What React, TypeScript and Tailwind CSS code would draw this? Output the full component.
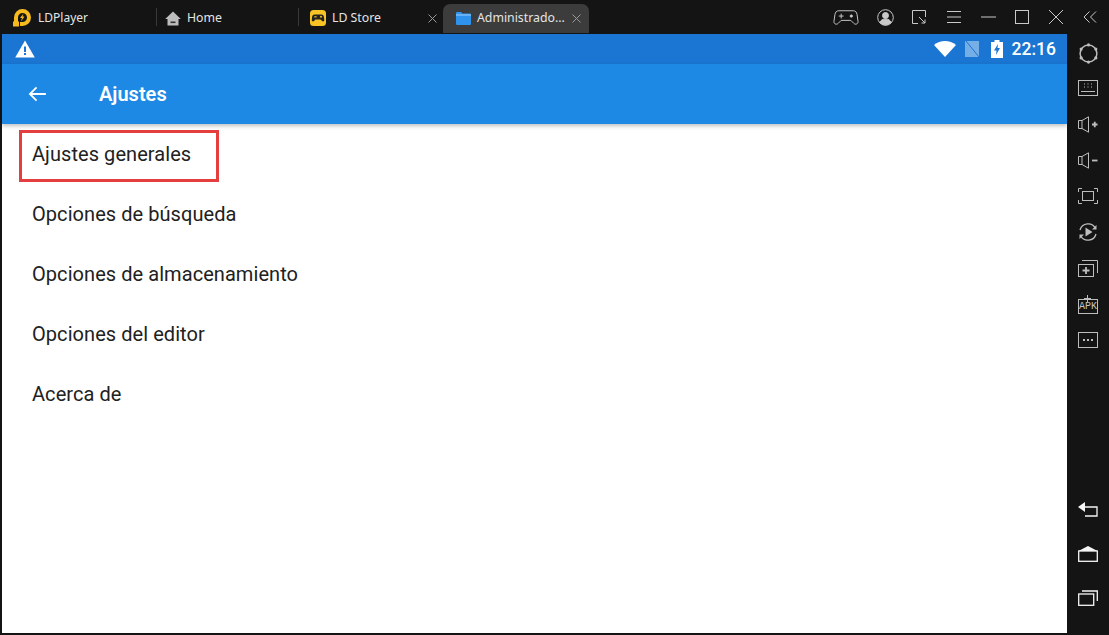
import React from 'react';

const s = '#c9c9c9';

const Logo = () => (
  <svg width="19" height="19" viewBox="0 0 19 19">
    <path d="M4 15V9.500a6.500 6.500 0 1 1 6.500 6.500H8" fill="none" stroke="#f7bb1e" strokeWidth="4" />
    <rect x="1" y="13.500" width="6" height="5" fill="#f7bb1e" />
    <path d="M11.500 5.500l-3.500 4.500h2l-1 3.500 3.500-5h-2z" fill="#f7bb1e" />
  </svg>
);

const HomeIcon = () => (
  <svg width="16" height="15" viewBox="0 0 16 15">
    <path d="M8 0.500 15.800 8H13.500V14.500H2.500V8H0.200z" fill="#bdbdbd" />
    <rect x="5.500" y="10.500" width="5" height="1.600" fill="#333" />
  </svg>
);

const StoreIcon = () => (
  <svg width="16" height="16" viewBox="0 0 16 16">
    <rect width="16" height="16" rx="3.500" fill="#f7c325" />
    <path d="M4.500 4.500h7c1.500 0 2.300 1.200 2.500 3l.3 2.500c.1 1.400-1.300 1.900-2.200 1L10.500 9.500h-5L4 11c-.9.900-2.300.400-2.200-1L2 7.500c.2-1.800 1-3 2.500-3z" fill="#222" />
    <rect x="4.200" y="6.300" width="2.400" height="1.100" fill="#f7c325" />
    <circle cx="11" cy="6.800" r="1" fill="#f7c325" />
  </svg>
);

const FolderIcon = () => (
  <svg width="15" height="13" viewBox="0 0 15 13">
    <path d="M0 1a1 1 0 0 1 1-1h4l1.500 1.500H14a1 1 0 0 1 1 1V12a1 1 0 0 1-1 1H1a1 1 0 0 1-1-1z" fill="#2f93ee" />
    <rect y="2.500" width="15" height="1" fill="#9cd0fa" />
  </svg>
);

const CloseX = () => (
  <svg width="9" height="9" viewBox="0 0 9 9" stroke="#9a9a9a" strokeWidth="1">
    <path d="M0.500 0.500 8.500 8.500M8.500 0.500 0.500 8.500" />
  </svg>
);

function Tab({ w, icon, label, close, active }: { w: string; icon?: React.ReactNode; label: string; close?: boolean; active?: boolean }) {
  return (
    <div className={`${w} ${active ? 'bg-[#3c3c3c] rounded-t-[7px] mt-1 h-[29px] pl-[13px] pr-[8px]' : 'h-[34px] pt-[2px]'} flex items-center shrink-0`}>
      {icon}
      <span className="ml-[6px] text-[12.300px] text-[#e4e4e4] font-['Noto_Sans',sans-serif] whitespace-nowrap">{label}</span>
      {close && <span className="ml-auto flex"><CloseX /></span>}
    </div>
  );
}

const Sep = () => <div className="w-px h-[18px] bg-[#3a3a3a] shrink-0" />;

const TopIcons = () => (
  <div className="ml-auto flex items-center h-[34px] pr-[12px]" >
    <svg width="26" height="17" viewBox="0 0 27 17" fill="none" stroke={s} strokeWidth="1">
      <path d="M6 1.500h15c2.500 0 3.500 1.500 4 4l1 7c.3 2.500-2.500 4-4.500 2l-3-3h-10l-3 3c-2 2-4.800.5-4.500-2l1-7c.5-2.500 1.500-4 4-4z" />
      <path d="M6 7h5M8.500 4.500v5" />
      <circle cx="19" cy="7" r="1.200" fill={s} />
    </svg>
    <svg className="ml-[18px]" width="17" height="17" viewBox="0 0 17 17" fill="none" stroke={s}>
      <circle cx="8.500" cy="8.500" r="7.800" />
      <circle cx="8.500" cy="6.500" r="3" fill={s} />
      <path d="M2.800 13.500c1-2.500 3-3.500 5.700-3.500s4.700 1 5.700 3.500a7.800 7.800 0 0 1-11.400 0z" fill={s} />
    </svg>
    <svg className="ml-[18px]" width="14" height="14" viewBox="0 0 14 14" fill="none" stroke={s}>
      <path d="M6 13.500H.5V.5h13V7" />
      <path d="M7 7l6 6M13 9.500V13H9.500" />
    </svg>
    <svg className="ml-[21px]" width="14" height="12" viewBox="0 0 14 12" stroke={s}>
      <path d="M0 .5h14M0 6h14M0 11.500h14" />
    </svg>
    <svg className="ml-[20px]" width="15" height="2" viewBox="0 0 15 2" stroke={s}>
      <path d="M0 1h15" />
    </svg>
    <svg className="ml-[19px]" width="14" height="14" viewBox="0 0 14 14" fill="none" stroke={s}>
      <rect x=".5" y=".5" width="13" height="13" />
    </svg>
    <svg className="ml-[20px]" width="14" height="14" viewBox="0 0 14 14" stroke={s}>
      <path d="M0 0 14 14M14 0 0 14" />
    </svg>
    <svg className="ml-[20px]" width="14" height="12" viewBox="0 0 14 12" fill="none" stroke={s}>
      <path d="M6.500.5 1 6l5.500 5.500M13 .5 7.500 6l5.500 5.500" />
    </svg>
  </div>
);

const rail = '#bdbdbd';

const SideIcon = ({ children, h = 36 }: { children: React.ReactNode; h?: number }) => (
  <div className="flex items-center justify-center" style={{ height: h }}>{children}</div>
);

const SideBar = () => (
  <div className="w-[42px] shrink-0 flex flex-col bg-[#141414] pt-[3px] pb-[15px]">
    <SideIcon h={33}>
      <svg width="21" height="21" viewBox="0 0 20 20" fill="none" stroke={rail} strokeWidth="1.400">
        <circle cx="10" cy="10" r="8" />
        <g fill={rail} stroke="none">
          <circle cx="10" cy="1.800" r="1.500" /><circle cx="10" cy="18.200" r="1.500" />
          <circle cx="3" cy="5.800" r="1.500" /><circle cx="17" cy="5.800" r="1.500" />
          <circle cx="3" cy="14.200" r="1.500" /><circle cx="17" cy="14.200" r="1.500" />
        </g>
      </svg>
    </SideIcon>
    <SideIcon>
      <svg width="20" height="16" viewBox="0 0 20 16" fill="none" stroke={rail}>
        <rect x=".5" y=".5" width="19" height="15" />
        <path d="M6 4h1M9.500 4h1M13 4h1M6 7h1M9.500 7h1M13 7h1M3 11.500h14" strokeWidth="1.200" />
      </svg>
    </SideIcon>
    <SideIcon>
      <svg width="20" height="17" viewBox="0 0 20 17" fill="none" stroke={rail}>
        <path d="M.5 4.500H4L10.500.8v15.400L4 12.500H.5zM4 4.500v8" />
        <path d="M14 8.500h5.500M16.750 5.700v5.600" strokeWidth="1.800" />
      </svg>
    </SideIcon>
    <SideIcon>
      <svg width="20" height="17" viewBox="0 0 20 17" fill="none" stroke={rail}>
        <path d="M.5 4.500H4L10.500.8v15.400L4 12.500H.5zM4 4.500v8" />
        <path d="M14 8.500h5.500" strokeWidth="1.800" />
      </svg>
    </SideIcon>
    <SideIcon>
      <svg width="20" height="16" viewBox="0 0 20 16" fill="none" stroke={rail}>
        <rect x="4.500" y="3.500" width="11" height="9" />
        <path d="M.5 4V.5H4M16 .5h3.500V4M.5 12v3.500H4M16 15.500h3.500V12" />
      </svg>
    </SideIcon>
    <SideIcon>
      <svg width="20" height="20" viewBox="0 0 20 20" fill="none" stroke={rail} strokeWidth="1.300">
        <path d="M2 8a8.300 8.300 0 0 1 15.500-1.500M18 12a8.300 8.300 0 0 1-15.500 1.500" />
        <path d="M18.500 3v4.500H14M1.500 17v-4.500H6" fill={rail} stroke="none" />
        <path d="M7.500 5.500 14.500 10l-7 4.500z" fill={rail} stroke="none" />
      </svg>
    </SideIcon>
    <SideIcon>
      <svg width="20" height="17" viewBox="0 0 20 17" fill="none" stroke={rail}>
        <rect x=".5" y="4.500" width="15" height="12" />
        <path d="M4 .5h15.500V13" />
        <path d="M4.500 10.500h7M8 7v7" strokeWidth="1.800" />
      </svg>
    </SideIcon>
    <SideIcon>
      <div className="relative w-5 h-[19px] flex items-end">
        <div className="w-5 h-[15px] border border-[#bdbdbd] text-[10px] leading-[13px] text-center text-[#c4c4c4] font-['Liberation_Mono',monospace]">APK</div>
        <svg className="absolute left-[6px] top-0" width="7" height="7" viewBox="0 0 7 7" stroke={rail}>
          <path d="M0 3.500h7M3.500 0v7" />
        </svg>
      </div>
    </SideIcon>
    <SideIcon>
      <svg width="20" height="16" viewBox="0 0 20 16" fill="none" stroke={rail}>
        <rect x=".5" y=".5" width="19" height="15" />
        <path d="M5 8h2M9 8h2M13 8h2" strokeWidth="2" />
      </svg>
    </SideIcon>
    <div className="mt-auto flex flex-col">
      <SideIcon h={44}>
        <svg width="20" height="16" viewBox="0 0 20 16" fill="none" stroke="#f5f5f5" strokeWidth="1.300">
          <path d="M7 5h12v9H7" />
          <path d="M7 0v10L0 5z" fill="#f5f5f5" stroke="none" />
        </svg>
      </SideIcon>
      <SideIcon h={44}>
        <svg width="20" height="16" viewBox="0 0 20 16" fill="none" stroke="#f5f5f5" strokeWidth="1.300">
          <rect x=".7" y="5" width="18.600" height="10.300" />
          <path d="M10 0 19.500 5H.5z" fill="#f5f5f5" stroke="none" />
        </svg>
      </SideIcon>
      <SideIcon h={44}>
        <svg width="20" height="16" viewBox="0 0 20 16" fill="none" stroke="#f5f5f5" strokeWidth="1.300">
          <rect x=".7" y="4" width="15" height="11.300" />
          <path d="M4 1h15.300v10" />
        </svg>
      </SideIcon>
    </div>
  </div>
);

const StatusBar = () => (
  <div className="h-[30px] bg-[#1a76d2] flex items-center pl-[13px] pr-[11px] shrink-0">
    <svg width="20" height="18" viewBox="0 0 20 18">
      <path d="M10 .5 19.800 17.500H.2z" fill="#fff" />
      <rect x="9" y="6.500" width="2" height="5.500" fill="#1a76d2" />
      <rect x="9" y="13" width="2" height="2" fill="#1a76d2" />
    </svg>
    <div className="ml-auto flex items-center">
      <svg width="22" height="16" viewBox="0 0 22 16">
        <path d="M11 16 0 4C6-1.300 16-1.300 22 4z" fill="#fff" />
      </svg>
      <svg className="ml-[9px]" width="14" height="16" viewBox="0 0 14 16">
        <rect width="14" height="16" fill="#76aee6" />
        <path d="M1 0 14 16" stroke="#1a76d2" strokeWidth="1" />
      </svg>
      <svg className="ml-[12px]" width="12" height="18" viewBox="0 0 12 18">
        <path d="M3.500 0h5v2H12v16H0V2h3.500z" fill="#fff" />
        <path d="M7 4 3 10.500h2.500L5 15l4-7H6.500z" fill="#1a76d2" />
      </svg>
      <span className="ml-[9px] text-[17.500px] font-medium text-white font-['Roboto',sans-serif]">22:16</span>
    </div>
  </div>
);

const items = ['Ajustes generales', 'Opciones de búsqueda', 'Opciones de almacenamiento', 'Opciones del editor', 'Acerca de'];

export default function App() {
  return (
    <div className="w-[1109px] h-[635px] bg-[#141414] flex flex-col overflow-hidden">
      <div className="h-[34px] flex items-start shrink-0">
        <div className="w-[156px] h-[34px] pl-[12px] pt-[1px] flex items-center shrink-0">
          <Logo />
          <span className="ml-[7px] text-[12px] text-[#e4e4e4] font-['Noto_Sans',sans-serif]">LDPlayer</span>
        </div>
        <div className="h-[34px] flex items-center"><Sep /></div>
        <Tab w="w-[141px] pl-[8px]" icon={<HomeIcon />} label="Home" />
        <div className="h-[34px] flex items-center"><Sep /></div>
        <Tab w="w-[144px] pl-[11px] pr-[6px]" icon={<StoreIcon />} label="LD Store" close />
        <Tab w="w-[146px]" icon={<FolderIcon />} label="Administrado..." close active />
        <TopIcons />
      </div>
      <div className="flex flex-1 min-h-0">
        <div className="flex-1 flex flex-col pl-[2px] pb-[2px] min-w-0">
          <StatusBar />
          <div className="h-[60px] bg-[#1e88e5] flex items-center pl-[26px] shrink-0 shadow-[0_2px_4px_rgba(0,0,0,0.25)] z-10">
            <svg width="18" height="16" viewBox="0 0 20 18" fill="none" stroke="#fff" strokeWidth="2">
              <path d="M20 9H2M9.500 1.500 2 9l7.500 7.500" />
            </svg>
            <span className="ml-[53px] text-[20px] font-semibold text-white font-['Roboto',sans-serif]">Ajustes</span>
          </div>
          <div className="flex-1 bg-white">
            {items.map((item, i) => (
              <div key={item} className="relative h-[60px] flex items-center pl-[30px] text-[20px] tracking-[0.06px] text-[#212121] font-['Roboto',sans-serif]">
                {item}
                {i === 0 && <div className="absolute left-[17px] top-[6px] w-[200px] h-[52px] border-[3px] border-[#e53e3e]" />}
              </div>
            ))}
          </div>
        </div>
        <SideBar />
      </div>
    </div>
  );
}
